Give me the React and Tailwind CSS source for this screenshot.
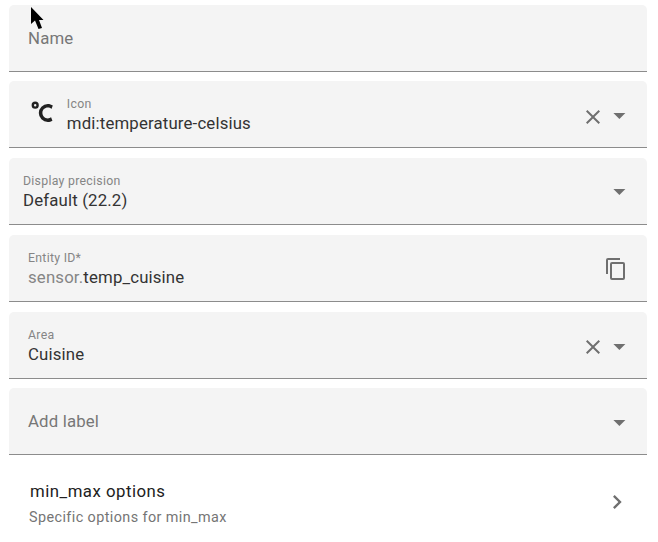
const ICONS = {
  celsius:
    'M16.5,5C18.05,5 19.5,5.47 20.69,6.28L19.53,9.17C18.73,8.44 17.67,8 16.5,8C14,8 12,10 12,12.5C12,15 14,17 16.5,17C17.53,17 18.47,16.66 19.23,16.08L20.37,18.93C19.24,19.61 17.92,20 16.5,20A7.5,7.5 0 0,1 9,12.5A7.5,7.5 0 0,1 16.5,5M6,3A3,3 0 0,1 9,6A3,3 0 0,1 6,9A3,3 0 0,1 3,6A3,3 0 0,1 6,3M6,5A1,1 0 0,0 5,6A1,1 0 0,0 6,7A1,1 0 0,0 7,6A1,1 0 0,0 6,5Z',
  close:
    'M19,6.41L17.59,5L12,10.59L6.41,5L5,6.41L10.59,12L5,17.59L6.41,19L12,13.41L17.59,19L19,17.59L13.41,12L19,6.41Z',
  down: 'M7,10L12,15L17,10H7Z',
  copy: 'M19,21H8V7H19M19,5H8A2,2 0 0,0 6,7V21A2,2 0 0,0 8,23H19A2,2 0 0,0 21,21V7A2,2 0 0,0 19,5M16,1H4A2,2 0 0,0 2,3V17H4V3H16V1Z',
  chevron: 'M8.59,16.58L13.17,12L8.59,7.41L10,6L16,12L10,18L8.59,16.58Z',
}

const Icon = ({ name, className }) => (
  <svg viewBox="0 0 24 24" fill="currentColor" className={`shrink-0 ${className}`}>
    <path d={ICONS[name]} />
  </svg>
)

const Field = ({ className = 'pl-[19px]', children }) => (
  <div
    className={`flex h-[67px] items-start rounded-t-[5px] border-b border-[#8c8c8c] bg-[#f4f4f4] ${className}`}
  >
    {children}
  </div>
)

const Label = ({ label, children }) => (
  <div className="flex-1 pt-[15px]">
    <p className="text-[12.3px] leading-4 tracking-[0.28px] text-[#858585]">{label}</p>
    <p className="mt-px text-[16.8px] leading-5 tracking-[0.16px] text-[#333]">{children}</p>
  </div>
)

const Placeholder = ({ children }) => (
  <p className="flex-1 pt-[23px] text-[16.8px] leading-5 tracking-[0.16px] text-[#777]">{children}</p>
)

const App = () => (
  <main className="relative h-[542px] w-[658px] overflow-hidden bg-white pt-[5px] pr-[11px] pl-[9px] font-[Roboto,sans-serif]">
    <Field>
      <Placeholder>Name</Placeholder>
    </Field>

    <div className="mt-[9px]">
      <Field>
        <Icon name="celsius" className="mt-[17px] mr-[10px] size-[28.8px] text-[#212121]" />
        <Label label="Icon">mdi:temperature-celsius</Label>
        <Icon name="close" className="mt-6 size-6 text-[#6f6f6f]" />
        <Icon name="down" className="mt-5 mr-[13.5px] size-[28.8px] text-[#6f6f6f]" />
      </Field>
    </div>

    <div className="mt-[10px]">
      <Field className="pl-[14px]">
        <Label label="Display precision">Default (22.2)</Label>
        <Icon name="down" className="mt-[19px] mr-[13.5px] size-[28.8px] text-[#6f6f6f]" />
      </Field>
    </div>

    <div className="mt-[10px]">
      <Field>
        <Label label="Entity ID*">
          <span className="text-[#858585]">sensor.</span>temp_cuisine
        </Label>
        <Icon name="copy" className="mt-[22px] mr-[19px] size-6 text-[#6f6f6f]" />
      </Field>
    </div>

    <div className="mt-[10px]">
      <Field>
        <Label label="Area">Cuisine</Label>
        <Icon name="close" className="mt-[23px] size-6 text-[#6f6f6f]" />
        <Icon name="down" className="mt-5 mr-[13.5px] size-[28.8px] text-[#6f6f6f]" />
      </Field>
    </div>

    <div className="mt-[9px]">
      <Field>
        <Placeholder>Add label</Placeholder>
        <Icon name="down" className="mt-5 mr-[13.5px] size-[28.8px] text-[#6f6f6f]" />
      </Field>
    </div>

    <div className="flex items-start pt-[26px] pl-[20px]">
      <div className="flex-1">
        <p className="pl-px text-[16.8px] leading-5 tracking-[0.5px] text-[#212121]">min_max options</p>
        <p className="mt-2 text-[14.4px] leading-[18px] tracking-[0.41px] text-[#757575]">
          Specific options for min_max
        </p>
      </div>
      <Icon name="chevron" className="mt-[7px] mr-[16px] size-7 text-[#6f6f6f]" />
    </div>

    {/* mouse pointer */}
    <svg viewBox="0 0 13 23" className="absolute top-[7px] left-[31px] h-[23px] w-[13px]">
      <path d="M0,0V17L4,13.5L7.5,22L11,21L8,13H12.5Z" fill="#000" />
    </svg>
  </main>
)

export default App
